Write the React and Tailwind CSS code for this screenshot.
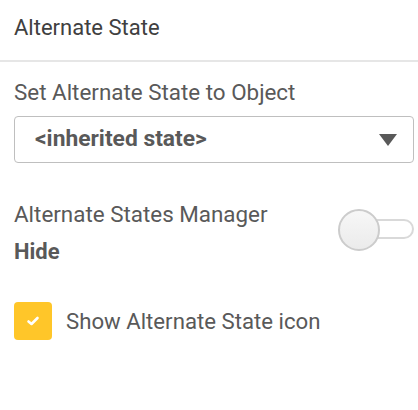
export default function App() {
  return (
    <div className="w-[418px] h-[410px] bg-white text-[#404040]" style={{ fontFamily: 'Roboto, "Liberation Sans", sans-serif' }}>
      <div className="h-[62px] border-b-2 border-[#e6e6e6] pl-[14px] pr-[4px] pt-[15px]">
        <div className="text-[22px] leading-[26px] text-[#404040]">Alternate State</div>
      </div>

      <div className="pl-[14px] pr-[4px]">
        <div className="mt-[17px] text-[22.4px] leading-[26px] text-[#595959]">Set Alternate State to Object</div>
        <div className="mt-[11px] h-[47px] rounded-[4px] border border-[#bfbfbf] flex items-center justify-between pl-[20px] pr-[16px]">
          <span className="text-[22.8px] font-bold text-[#595959]">&lt;inherited state&gt;</span>
          <svg width="18" height="12" viewBox="0 0 18 12">
            <polygon points="0,0 18,0 9,12" fill="#595959" />
          </svg>
        </div>

        <div className="mt-[38px] flex justify-between">
          <div>
            <div className="text-[22.4px] leading-[26px] text-[#595959]">Alternate States Manager</div>
            <div className="mt-[12px] text-[22px] leading-[26px] font-bold text-[#595959]">Hide</div>
          </div>
          <div className="relative w-[76px] h-[42px] mt-[8px]">
            <div className="absolute right-0 top-[10px] w-[70px] h-[20px] rounded-full border-2 border-[#d9d9d9] bg-white" />
            <div className="absolute left-0 top-0 w-[42px] h-[42px] rounded-full border-2 border-[#cccccc] bg-gradient-to-b from-[#f7f7f7] to-[#ebebeb]" />
          </div>
        </div>

        <div className="mt-[37px] flex items-center gap-[14px]">
          <div className="w-[38px] h-[38px] rounded-[4px] bg-[#ffc629] flex items-center justify-center">
            <svg width="14" height="12" viewBox="0 0 14 12">
              <path d="M2.5 6.5 L5.5 9 L11.5 3" fill="none" stroke="white" strokeWidth="2.6" strokeLinecap="round" strokeLinejoin="round" />
            </svg>
          </div>
          <span className="text-[22.2px] leading-[26px] text-[#595959]">Show Alternate State icon</span>
        </div>
      </div>
    </div>
  )
}
